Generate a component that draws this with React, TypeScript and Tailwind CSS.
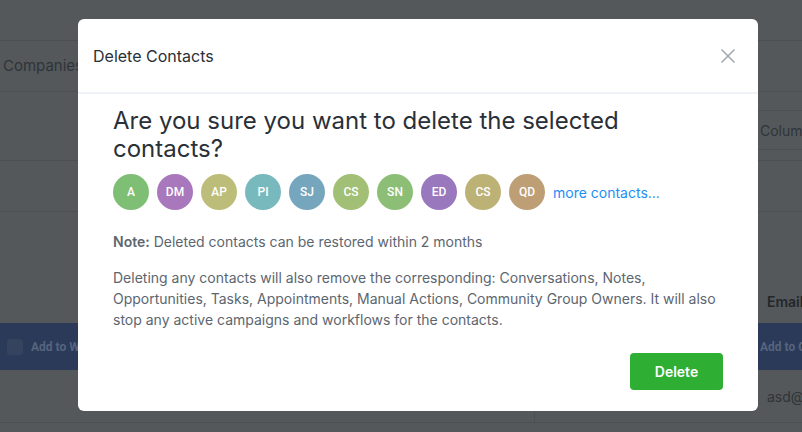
const contacts = [
  { initials: 'A', color: '#7fbe75' },
  { initials: 'DM', color: '#a877bc' },
  { initials: 'AP', color: '#bcbd78' },
  { initials: 'PI', color: '#77b9bd' },
  { initials: 'SJ', color: '#75a6bd' },
  { initials: 'CS', color: '#a1bf75' },
  { initials: 'SN', color: '#8dbe75' },
  { initials: 'ED', color: '#9a78bd' },
  { initials: 'CS', color: '#bdb276' },
  { initials: 'QD', color: '#bd9e75' },
]

export default function App() {
  return (
    <div className="relative h-[432px] w-[802px] overflow-hidden bg-[#54585b] font-['Inter',sans-serif]">
      {/* Page behind the overlay */}
      <div className="flex flex-col">
        <div className="h-[41px] border-b border-[#4c5053]" />
        <div className="flex h-[51px] items-center border-b border-[#4c5053] pl-[3px]">
          <span className="text-[15px] text-[#2f3438]">Companies</span>
        </div>
        <div className="flex h-[69px] justify-end border-b border-[#4c5053]">
          <div className="mt-[18px] flex h-[40px] w-[44px] items-center overflow-hidden border-y border-[#4c5053] pl-[2px]">
            <span className="whitespace-nowrap text-[14px] text-[#2f3438]">Columns</span>
          </div>
        </div>
        <div className="h-[51px] border-b border-[#4c5053]" />
        <div className="flex h-[111px] items-end justify-end pb-[11px]">
          <span className="w-[35px] overflow-hidden whitespace-nowrap text-[14px] font-semibold text-[#23272a]">Email</span>
        </div>
        <div className="flex h-[47px] items-center justify-between bg-[#2b3a59] font-['Roboto',sans-serif]">
          <div className="flex items-center gap-[8px] pl-[7px]">
            <div className="h-[16px] w-[16px] rounded-[3px] bg-[#35435f]" />
            <span className="whitespace-nowrap text-[12px] font-bold text-[#56647e]">Add to Workflow</span>
          </div>
          <span className="w-[42px] overflow-hidden whitespace-nowrap text-[12px] font-bold text-[#56647e]">Add to Campaign</span>
        </div>
        <div className="flex h-[53px] border-b border-[#4c5053]">
          <div className="w-[535px] border-r border-[#4c5053]" />
          <div className="flex-1" />
          <div className="flex w-[35px] items-center overflow-hidden">
            <span className="whitespace-nowrap text-[14px] text-[#2f3438]">asd@mail.com</span>
          </div>
        </div>
      </div>

      {/* Modal */}
      <div className="absolute left-[78px] top-[19px] w-[680px] rounded-[6px] bg-white">
        <div className="flex h-[75px] items-center justify-between border-b-2 border-[#eff3f7] pl-[15px] pr-[23px]">
          <h3 className="text-[16px] text-[#2a3038]">Delete Contacts</h3>
          <svg width="14" height="14" viewBox="0 0 14 14" fill="none" stroke="#a3abb2" strokeWidth="1.6" strokeLinecap="round">
            <path d="M1 1 13 13" />
            <path d="M13 1 1 13" />
          </svg>
        </div>
        <div className="px-[35px] pb-[21px] pt-[13px]">
          <h2 className="text-[24px] leading-[28px] text-[#2a3038]">
            Are you sure you want to delete the selected contacts?
          </h2>
          <div className="mt-[11px] flex items-center gap-[8px]">
            {contacts.map((c, i) => (
              <div
                key={i}
                className="flex h-[36px] w-[36px] items-center justify-center rounded-full font-['Roboto',sans-serif] text-[12px] font-medium text-white"
                style={{ backgroundColor: c.color }}
              >
                {c.initials}
              </div>
            ))}
            <span className="text-[14px] text-[#1e8ef5]">more contacts...</span>
          </div>
          <p className="mt-[21px] text-[14px] leading-[21px] text-[#5c6670]">
            <span className="font-semibold">Note:</span> Deleted contacts can be restored within 2 months
          </p>
          <p className="mt-[15px] text-[14px] leading-[21px] text-[#5c6670]">
            Deleting any contacts will also remove the corresponding: Conversations, Notes, Opportunities, Tasks, Appointments, Manual Actions, Community Group Owners. It will also stop any active campaigns and workflows for the contacts.
          </p>
          <div className="mt-[23px] flex justify-end">
            <button type="button" className="h-[37px] w-[93px] rounded-[4px] bg-[#2fae34] text-[14px] font-semibold text-white">
              Delete
            </button>
          </div>
        </div>
      </div>
    </div>
  )
}
